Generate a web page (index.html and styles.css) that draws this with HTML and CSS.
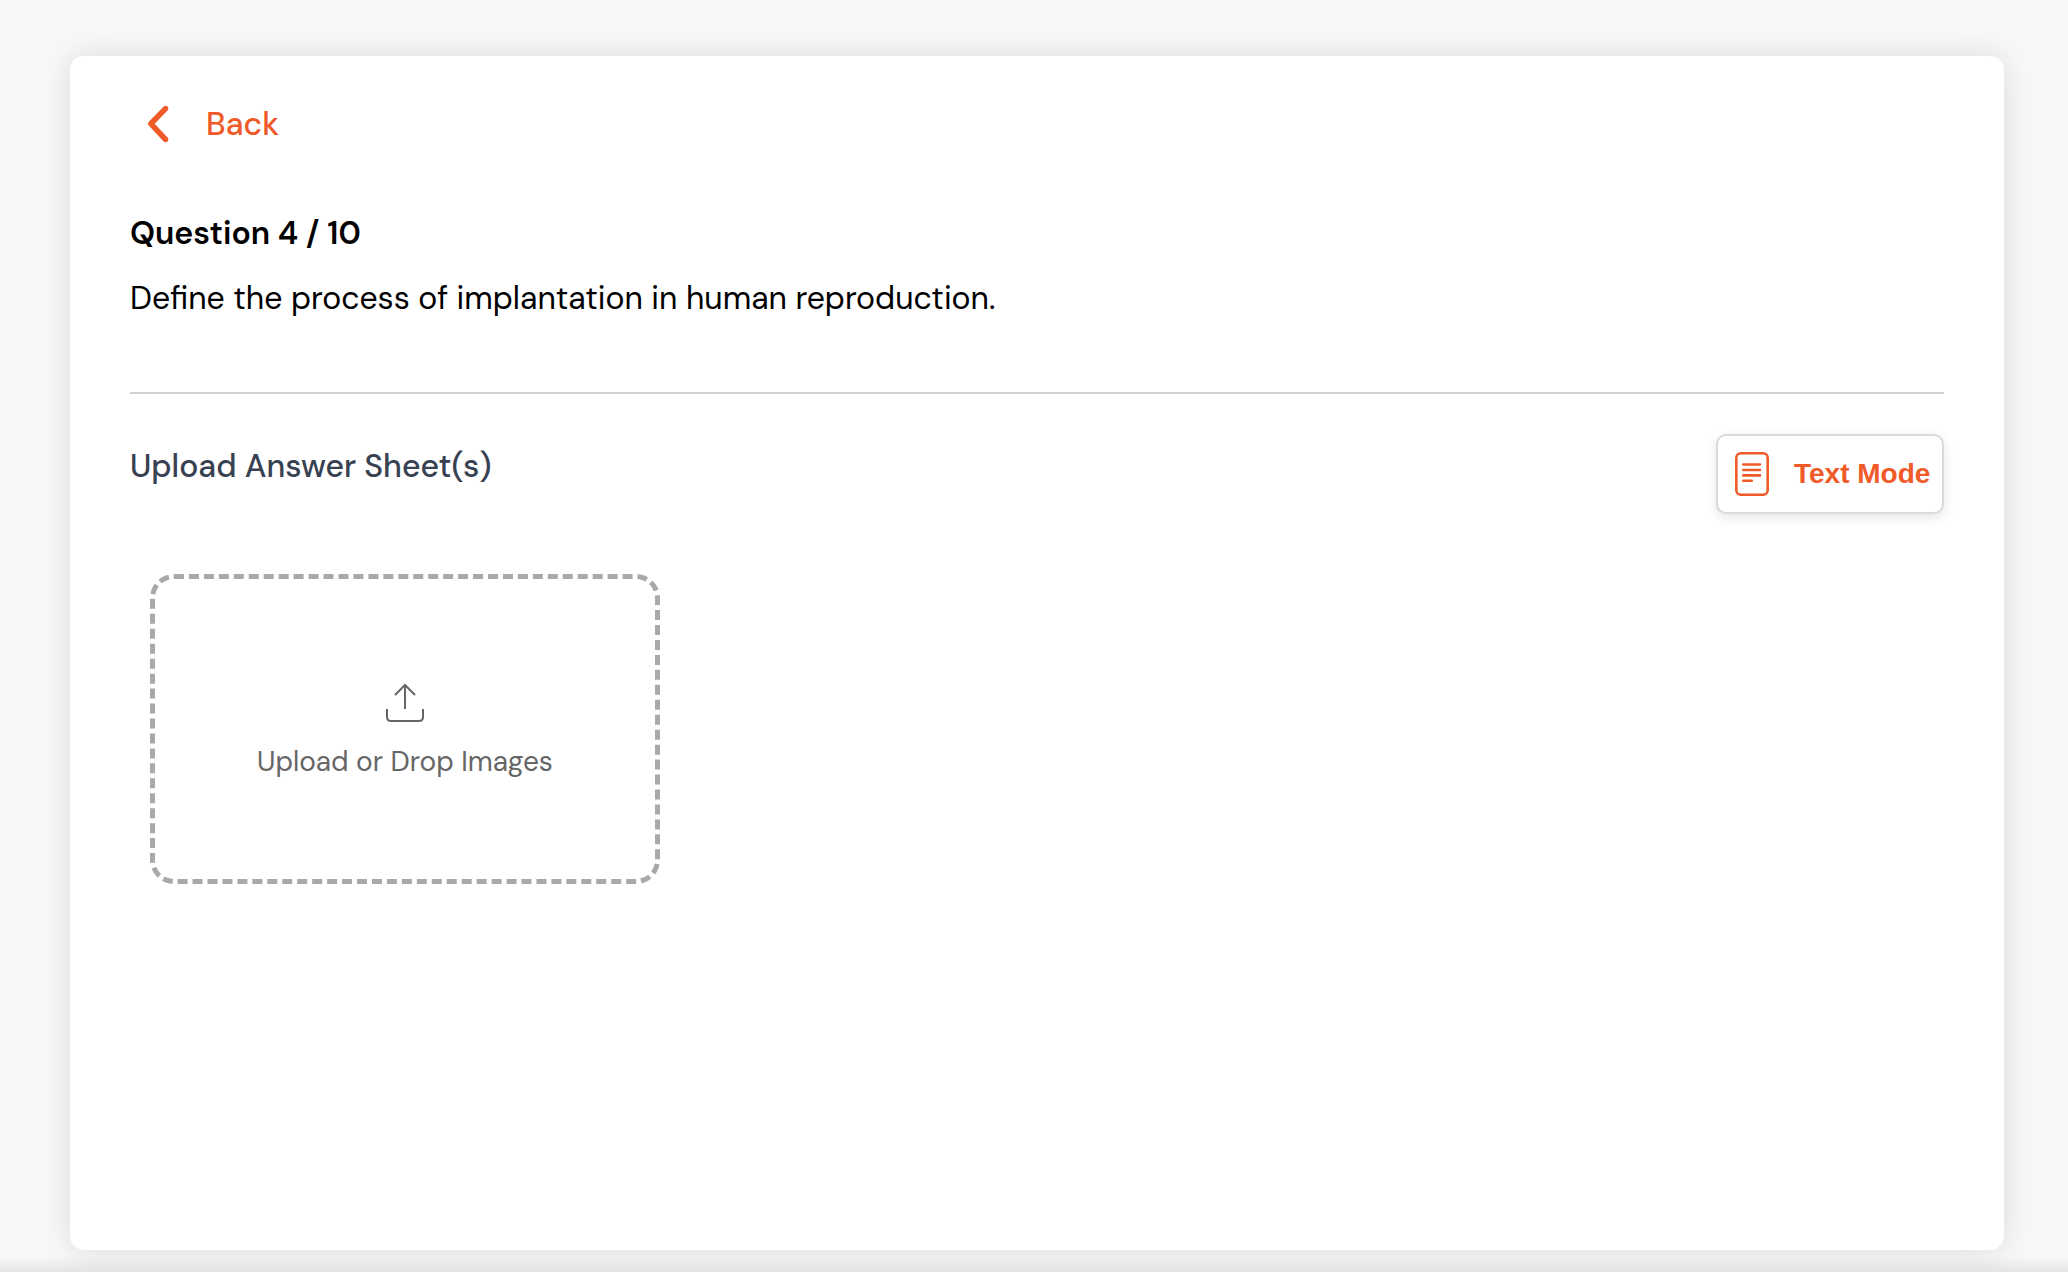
FILE: index.html
```html
<!DOCTYPE html>
<html lang="en">
<head>
<meta charset="utf-8">
<title>Question 4 / 10</title>
<link rel="stylesheet" href="styles.css">
</head>
<body>
<main class="card">
  <a class="back">
    <svg class="chevron" width="24" height="40" viewBox="0 0 24 40"><path d="M19.5 4.6 4.8 19.7 19.5 35.4" fill="none" stroke="currentColor" stroke-width="5.6" stroke-linecap="round" stroke-linejoin="round"/></svg>
    <span>Back</span>
  </a>
  <h1 class="number">Question 4 / 10</h1>
  <p class="question">Define the process of implantation in human reproduction.</p>
  <section class="answer">
    <h2 class="answer-title">Upload Answer Sheet(s)</h2>
    <button class="mode">
      <svg width="34" height="44" viewBox="0 0 34 44" fill="none" stroke="currentColor" stroke-linecap="round"><rect x="1.3" y="1.3" width="31.4" height="41.4" rx="4.5" stroke-width="2.6"/><path d="M8.3 12.5H25M8.3 18H25M8.3 23.4H25M8.3 28.8H16.8" stroke-width="2.6"/></svg>
      <span>Text Mode</span>
    </button>
  </section>
  <div class="drop">
    <svg width="38" height="40" viewBox="0 0 38 40" fill="none" stroke="currentColor" stroke-width="2"><path d="M19 26V2M9 12 19 2 29 12M1 26V34Q1 38 5 38H33Q37 38 37 34V26"/></svg>
    <span class="drop-label">Upload or Drop Images</span>
  </div>
</main>
<footer class="edge"></footer>
</body>
</html>
```
FILE: styles.css
```css
* { box-sizing: border-box; }
body {
  margin: 0;
  padding: 56px 64px 0 70px;
  height: 1272px;
  background: #f8f8f8;
  font-family: "DM Sans", Inter, sans-serif;
  color: #000;
}
.card {
  height: 1194px;
  padding: 48px 60px 0;
  background: #fff;
  border-radius: 14px;
  box-shadow: 0 0 32px rgba(0, 0, 0, .12);
}
.back {
  display: flex;
  align-items: center;
  gap: 36px;
  width: max-content;
  height: 40px;
  padding-left: 16px;
  color: #f05a28;
  font-size: 32px;
  font-weight: 500;
}
h1, h2, p { margin: 0; font-size: 32px; line-height: 40px; }
.number { margin-top: 69px; font-weight: 600; }
.question { margin-top: 25px; white-space: nowrap; }
.answer {
  display: flex;
  justify-content: space-between;
  align-items: flex-start;
  margin-top: 74px;
  padding-top: 40px;
  border-top: 2px solid #d1d1d1;
}
.answer-title { margin-top: 12px; font-weight: 500; color: #374151; }
.mode {
  display: flex;
  align-items: center;
  gap: 25px;
  width: 228px;
  height: 80px;
  padding: 0 0 0 17px;
  border: 2px solid #d9d9e0;
  border-radius: 10px;
  background: #fff;
  box-shadow: 0 4px 12px rgba(0, 0, 0, .1);
  color: #f05a28;
  font: bold 28px "Liberation Sans", Arial, sans-serif;
  white-space: nowrap;
}
.drop {
  display: flex;
  flex-direction: column;
  align-items: center;
  width: 510px;
  height: 310px;
  margin: 60px 0 0 20px;
  padding-top: 104px;
  border: 5px dashed #a9a9a9;
  border-radius: 24px;
  color: #666;
  font-size: 28px;
  line-height: 36px;
}
.drop-label { margin-top: 21px; }
.edge {
  height: 16px;
  margin: 6px -64px 0 -70px;
  background: linear-gradient(rgba(0, 0, 0, 0), rgba(0, 0, 0, .08));
}
```
